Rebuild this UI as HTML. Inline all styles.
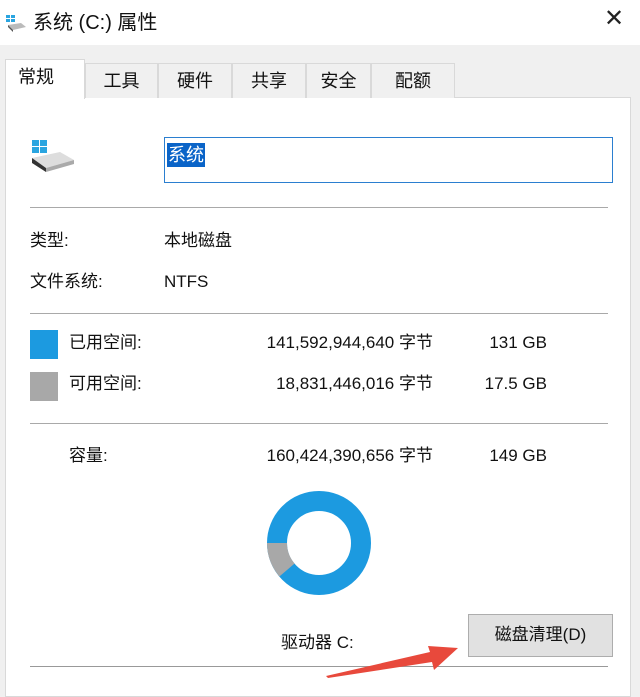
<!DOCTYPE html><html><head><meta charset="utf-8"><style>
*{margin:0;padding:0;box-sizing:border-box}
body{width:640px;height:693px;overflow:hidden;background:#f0f0f0;font-family:"Liberation Sans","Noto Sans CJK SC",sans-serif;color:#111;font-size:17px;position:relative}
.a{position:absolute;white-space:nowrap;line-height:22px}
.tab{position:absolute;top:63px;height:35px;background:#f0f0f0;border:1px solid #d9d9d9;border-bottom:none;font-size:18px;padding:6px 0 0 0;text-align:center;line-height:22px}
.ln{position:absolute;left:30px;width:578px;height:1px;background:#a9a9a9}
.r{text-align:right}
</style></head><body>
<div class="a" style="left:0;top:0;width:640px;height:45px;background:#fff"></div>
<svg class="a" style="left:5px;top:15px" width="22" height="18"><rect x="1" y="0" width="4" height="3" fill="#2aa5e0"/><rect x="6" y="0" width="4" height="3" fill="#2aa5e0"/><rect x="1" y="4" width="4" height="3" fill="#2aa5e0"/><rect x="6" y="4" width="4" height="3" fill="#2aa5e0"/><path d="M3 10 L16 8 L21 12 L8 15 Z" fill="#bbb"/><path d="M3 10 L8 15 L8 17 L3 12Z" fill="#555"/></svg>
<div class="a" style="left:33px;top:10px;font-size:20px;line-height:26px">系统 (C:) 属性</div>
<div class="a" style="left:604px;top:8px;font-size:24px;color:#222">✕</div>
<div class="a" style="left:5px;top:97px;width:626px;height:600px;background:#fff;border:1px solid #d9d9d9"></div>
<div class="tab" style="left:5px;top:59px;height:40px;width:80px;background:#fff;border-color:#d9d9d9;text-align:left;padding:6px 0 0 12px">常规</div>
<div class="tab" style="left:85px;width:73px">工具</div>
<div class="tab" style="left:158px;width:74px">硬件</div>
<div class="tab" style="left:232px;width:74px">共享</div>
<div class="tab" style="left:306px;width:65px">安全</div>
<div class="tab" style="left:371px;width:84px">配额</div>
<svg class="a" style="left:30px;top:138px" width="48" height="36"><rect x="2" y="2" width="7" height="6" fill="#2aa5e0"/><rect x="10" y="2" width="7" height="6" fill="#2aa5e0"/><rect x="2" y="9" width="7" height="6" fill="#2aa5e0"/><rect x="10" y="9" width="7" height="6" fill="#2aa5e0"/><path d="M2 20 L30 14 L44 22 L16 30 Z" fill="#ddd"/><path d="M2 20 L16 30 L16 34 L2 25Z" fill="#333"/><path d="M16 30 L44 22 L44 26 L16 34Z" fill="#aaa"/></svg>
<div class="a" style="left:164px;top:137px;width:449px;height:46px;border:1px solid #2b7fd0;background:#fff"></div>
<div class="a" style="left:167px;top:143px;height:24px;background:#0a64c8;color:#fff;font-size:18px;padding:1px 1px">系统</div>
<div class="ln" style="top:207px"></div>
<div class="a" style="left:30px;top:230px">类型:</div>
<div class="a" style="left:164px;top:230px">本地磁盘</div>
<div class="a" style="left:30px;top:271px">文件系统:</div>
<div class="a" style="left:164px;top:271px">NTFS</div>
<div class="ln" style="top:313px"></div>
<div class="a" style="left:30px;top:330px;width:28px;height:29px;background:#1c9ae0"></div>
<div class="a" style="left:69px;top:332px">已用空间:</div>
<div class="a r" style="left:200px;width:233px;top:332px">141,592,944,640 字节</div>
<div class="a r" style="left:440px;width:107px;top:332px">131 GB</div>
<div class="a" style="left:30px;top:372px;width:28px;height:29px;background:#a8a8a8"></div>
<div class="a" style="left:69px;top:373px">可用空间:</div>
<div class="a r" style="left:200px;width:233px;top:373px">18,831,446,016 字节</div>
<div class="a r" style="left:440px;width:107px;top:373px">17.5 GB</div>
<div class="ln" style="top:423px"></div>
<div class="a" style="left:69px;top:445px">容量:</div>
<div class="a r" style="left:200px;width:233px;top:445px">160,424,390,656 字节</div>
<div class="a r" style="left:440px;width:107px;top:445px">149 GB</div>
<svg class="a" style="left:265px;top:490px" width="110" height="110"><circle cx="54" cy="53" r="42" fill="none" stroke="#1c9ae0" stroke-width="20"/><path d="M12 53 A42 42 0 0 0 22 80" fill="none" stroke="#a8a8a8" stroke-width="20"/></svg>
<div class="a" style="left:281px;top:632px">驱动器 C:</div>
<div class="a" style="left:468px;top:614px;width:145px;height:43px;background:#e1e1e1;border:1px solid #adadad;text-align:center;padding-top:9px">磁盘清理(D)</div>
<div class="ln" style="top:666px;background:#999"></div>
<svg class="a" style="left:320px;top:640px" width="140" height="40"><path d="M6 36 L110 12 L108 6 L138 8 L114 30 L112 22 L8 38Z" fill="#e8493c"/></svg>
</body></html>
